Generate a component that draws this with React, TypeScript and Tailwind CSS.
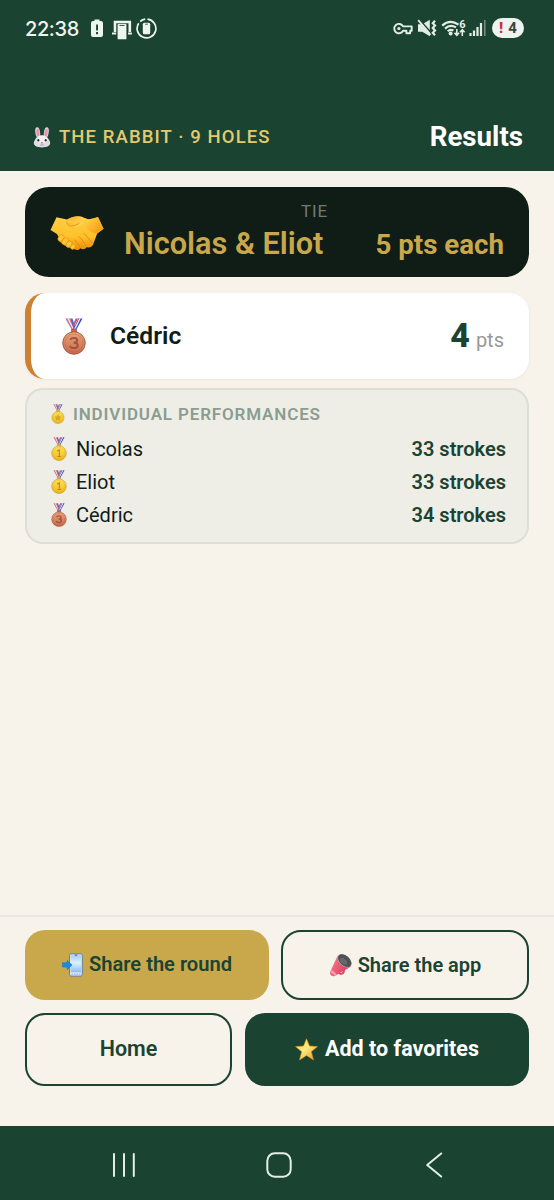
import React from "react";

function BatteryAlertIcon() {
  return (
    <svg className="h-[19px] w-[14px]" viewBox="0 0 14 19">
      <path fill="#edf5ee" fillRule="evenodd" d="M4.500 .5h5V2H11a2 2 0 0 1 2 2V16a2 2 0 0 1-2 2H3a2 2 0 0 1-2-2V4a2 2 0 0 1 2-2h1.500ZM6.100 5.500v6h1.900v-6ZM6.100 13v2.200h1.900V13Z" />
    </svg>
  );
}

function DevicesIcon() {
  return (
    <svg className="h-5 w-[22px]" viewBox="0 0 22 20">
      <path d="M4 12V2h14.800v10" fill="none" stroke="#edf5ee" strokeWidth="2.600" />
      <path d="M1 13.500h4.200M17 13.500h3.900" stroke="#edf5ee" strokeWidth="1.800" />
      <rect x="6.300" y="3.600" width="9.400" height="16" rx="1.300" fill="#edf5ee" stroke="#1b4332" strokeWidth=".5" />
      <path d="M9 5.500h4" stroke="#35604b" strokeWidth="1.200" strokeLinecap="round" />
    </svg>
  );
}

function PhoneRingIcon() {
  return (
    <svg className="h-[21px] w-[21px]" viewBox="0 0 21 21">
      <path d="M11.500 1.100a9.400 9.400 0 1 1-8.800 4.100M4.200 3.500a9.400 9.400 0 0 1 5-2.300" fill="none" stroke="#edf5ee" strokeWidth="1.700" />
      <rect x="6.800" y="4.800" width="7.400" height="11.400" rx="1.500" fill="#edf5ee" />
      <path d="M9.200 6.200h2.600" stroke="#35604b" strokeWidth="1" />
    </svg>
  );
}

function KeyIcon() {
  return (
    <svg className="h-[13px] w-5" viewBox="0 0 20 13">
      <path d="M10.100 4.400A4.700 4.700 0 1 0 10.100 8.700h3.300v2.600h3.800V8.700h1.500V4.400Z" fill="none" stroke="#e2eee5" strokeWidth="1.900" strokeLinejoin="round" />
      <circle cx="5.900" cy="6.500" r="1.600" fill="#e2eee5" />
    </svg>
  );
}

function MuteVibrateIcon() {
  return (
    <svg className="h-[18px] w-5" viewBox="0 0 20 18">
      <path d="M1 5.300h4.300L12.800 .8v16.400L5.300 12.700H1Z" fill="#e2eee5" />
      <path d="M2.200 .2 15.200 15" stroke="#1b4332" strokeWidth="1.500" />
      <path d="M1.200 1.200 13.500 15.800" stroke="#e2eee5" strokeWidth="1.800" />
      <path d="m18 1.800-2.200 2.400L18 6.600 15.800 9l2.200 2.400-2.200 2.400 2.200 2.400" fill="none" stroke="#e2eee5" strokeWidth="2.200" />
    </svg>
  );
}

function WifiIcon() {
  return (
    <svg className="h-[19px] w-[26px]" viewBox="0 0 26 19">
      <g fill="none" stroke="#e2eee5" strokeWidth="2.200">
        <path d="M1.200 6.600Q8.900-.5 17.500 5.600" />
        <path d="M4 9.600Q9 5 15 8.400" />
        <path d="M6.700 12.300Q9.200 10 12.400 11.500" />
      </g>
      <circle cx="9.600" cy="14.500" r="2" fill="#e2eee5" />
      <path d="M15.800 10v6.200m-2.300-2.400 2.300 2.500 2.300-2.500M21.300 17v-6.200M19 13.200l2.300-2.500 2.300 2.500" fill="none" stroke="#e2eee5" strokeWidth="1.600" />
      <text x="18.300" y="8.800" fill="#e2eee5" className="font-['Roboto',sans-serif] text-[11px] font-bold">6</text>
    </svg>
  );
}

function SignalIcon() {
  return (
    <svg className="h-[18px] w-[18px]" viewBox="0 0 18 18">
      <path d="M1.500 17v-3M5 17v-5.500M8.500 17V8M12 17V4" stroke="#e2eee5" strokeWidth="2.200" />
      <path d="M15.800 17V1" stroke="#799182" strokeWidth="1.500" />
    </svg>
  );
}

function Rabbit() {
  return (
    <svg className="h-[21px] w-[18px] shrink-0" viewBox="0 0 18 21">
      <g fill="#d8d7dc">
        <ellipse cx="4.700" cy="5.500" rx="2.400" ry="5.300" transform="rotate(-8 4.700 5.500)" />
        <ellipse cx="13.300" cy="5.500" rx="2.400" ry="5.300" transform="rotate(8 13.300 5.500)" />
      </g>
      <ellipse cx="4.900" cy="5.800" rx="1.500" ry="4.200" fill="#ec91ad" transform="rotate(-8 4.900 5.800)" />
      <ellipse cx="13.100" cy="5.800" rx="1.500" ry="4.200" fill="#ec91ad" transform="rotate(8 13.100 5.800)" />
      <path d="M9 8.300c4.500 0 5.600 2.500 7 4.400 3 4.500.2 7.700-7 7.700s-10-3.200-7-7.700c1.400-1.900 2.500-4.400 7-4.400Z" fill="#dedde1" />
      <ellipse cx="9" cy="12.500" rx="5.500" ry="3.800" fill="#f3f1f3" />
      <ellipse cx="5.300" cy="13.300" rx="1" ry="1.300" fill="#252327" />
      <ellipse cx="12.700" cy="13.300" rx="1" ry="1.300" fill="#252327" />
      <path d="M7.600 15h2.800L9 16.700Z" fill="#e66d91" />
      <path d="M9 16.500v1.200m-2 .3q1 .7 2-.3 1 1 2 .3" fill="none" stroke="#8e898f" strokeWidth=".6" />
    </svg>
  );
}

function Handshake() {
  return (
    <svg className="h-9 w-[54px] shrink-0" viewBox="0 0 54 36">
      <defs>
        <linearGradient id="hand-a" x1="0" y1="0" x2="0" y2="1">
          <stop stopColor="#ffcf43" />
          <stop offset=".6" stopColor="#ffc02b" />
          <stop offset="1" stopColor="#e98b08" />
        </linearGradient>
        <linearGradient id="hand-b" x1="0" y1="0" x2="1" y2=".5">
          <stop stopColor="#ffa829" />
          <stop offset=".45" stopColor="#ffd34b" />
          <stop offset="1" stopColor="#f8a31b" />
        </linearGradient>
      </defs>
      <path d="M6.500 2.300 17 4.500c3-2 7-3 12-3 4 0 6 2 9 3l10-2.200 5.500 11.400-6.300 4.700-4 10.800c-1.500 3-4.200 4-6.300 2.700-1.700 2.300-4.300 3-6.500 1.300-2 2.500-4.800 2.300-7 .4-2 .5-4-.3-5-2-3 .2-5-1.300-5.200-3.500-3-.2-5-2.500-4-5.200L7 19l-6.500-4Z" fill="url(#hand-a)" />
      <path d="M17 5C22 .8 30-.2 34.500 3.300L40 4.800l8-2.700 5.500 11.600-6.500 4.900c-4 0-8-2.600-12-6.600-2-1.400-5-1.200-7-.4-3 1.600-9.500 0-9.500-3.500 0-.7 3.500-.5 5-1.600Z" fill="url(#hand-b)" />
      <path d="M17 7c-.5 3 2 4.500 6.500 3.800 2-.3 3.500-1.800 5.500-2.300" fill="none" stroke="#e8920f" strokeWidth="1" strokeLinecap="round" />
      <path d="M34 18.500c3 2.500 5 6 8 9M29 21.500c3 2.500 4.500 6 7 9M25 25c2 2 3.500 4.500 5 6.500" fill="none" stroke="#df8608" strokeWidth=".9" strokeLinecap="round" />
      <g fill="#ffc638" stroke="#e0910f" strokeWidth=".6">
        <ellipse cx="11" cy="23" rx="2.600" ry="3.600" transform="rotate(38 11 23)" />
        <ellipse cx="15" cy="26.300" rx="2.700" ry="3.800" transform="rotate(38 15 26.300)" />
        <ellipse cx="19" cy="29.200" rx="2.500" ry="3.500" transform="rotate(38 19 29.200)" />
        <ellipse cx="23" cy="31.800" rx="2.100" ry="2.700" transform="rotate(38 23 31.800)" />
      </g>
    </svg>
  );
}

const medalColors = {
  gold: { light: "#ffe45c", base: "#efb71d", dark: "#c18a16" },
  bronze: { light: "#e9a47c", base: "#c9694a", dark: "#984b36" },
};

function Medal({ kind, mark, className }: { kind: "gold" | "bronze"; mark: string; className: string }) {
  const c = medalColors[kind];
  return (
    <svg className={`shrink-0 ${className}`} viewBox="0 0 24 37">
      <defs>
        <linearGradient id={`medal-${kind}`} x1="0" y1="0" x2="0" y2="1">
          <stop stopColor={c.light} />
          <stop offset="1" stopColor={c.base} />
        </linearGradient>
      </defs>
      <path d="M3.500.5h4.200L14 13h-3.500Z" fill="#dd6572" />
      <path d="M5.300.5h1.500l6 12h-1.400Z" fill="#f0f1ff" />
      <path d="M8 .5h2.500L13 8l-1 4Z" fill="#5366cf" />
      <path d="M16.200.5h4.300L13.500 13h-3Z" fill="#394cc4" />
      <path d="M17.200.5h1.500l-6 12h-1.400Z" fill="#f0f1ff" />
      <path d="M13.500.5H16l-4 8-.8-2Z" fill="#d75362" />
      <rect x="9.500" y="11" width="5" height="4" rx="1" fill={c.base} stroke={c.dark} strokeWidth=".7" />
      <circle cx="12" cy="25" r="11.300" fill={`url(#medal-${kind})`} stroke={c.dark} strokeWidth=".8" />
      <circle cx="12" cy="25" r="9" fill="none" stroke={c.dark} strokeOpacity=".35" strokeWidth=".8" />
      {mark === "star" ? (
        <path d="m12 18.500 2 4.200 4.500.6-3.300 3.200.8 4.500-4-2.200L8 31l.8-4.500-3.300-3.200 4.500-.6Z" fill={c.dark} fillOpacity=".6" />
      ) : mark === "1" ? (
        <path d="m9 22 3.500-2.200V30M9.500 30h6" fill="none" stroke={c.dark} strokeWidth="1.800" />
      ) : (
        <path d="M8.200 21.800c1.600-2.800 7-2.300 7 .5 0 1.800-1.700 2.400-3.500 2.400 2 0 4 .7 4 2.700 0 3.300-6.400 3.700-8 .6" fill="none" stroke={c.dark} strokeOpacity=".85" strokeWidth="2" />
      )}
    </svg>
  );
}

function PhoneArrow() {
  return (
    <svg className="h-6 w-[21px] shrink-0" viewBox="0 0 21 24">
      <defs>
        <linearGradient id="screen" x1="0" y1="0" x2="0" y2="1">
          <stop stopColor="#a5cdf8" />
          <stop offset=".45" stopColor="#dcf0ff" />
          <stop offset="1" stopColor="#8cbdf8" />
        </linearGradient>
      </defs>
      <rect x="7.500" y=".8" width="12.800" height="22.300" rx="1.500" fill="#d7e6f8" stroke="#6b7f98" />
      <rect x="8.500" y="2.200" width="10.800" height="17" fill="url(#screen)" />
      <path d="M12 1.500h4l-2 1.800Z" fill="#5b7088" />
      <path d="M9.500 21.200h9" stroke="#9cb8dc" strokeWidth="1.300" strokeDasharray="1.500 1" />
      <path d="M.5 9.700h4.800V7.500l4.800 4.400-4.800 4.800v-2.600H.5Z" fill="#168ce8" stroke="#0872c6" strokeWidth=".5" />
    </svg>
  );
}

function Megaphone() {
  return (
    <svg className="h-6 w-[23px] shrink-0" viewBox="0 0 23 24">
      <defs>
        <linearGradient id="horn" x1="0" y1="0" x2="1" y2=".6">
          <stop stopColor="#ff8594" />
          <stop offset="1" stopColor="#d9375b" />
        </linearGradient>
      </defs>
      <path d="M9.500 19.500c2 2.500 5.500 1.500 5.500-2.500" fill="none" stroke="#d8496b" strokeWidth="2" />
      <path d="M8.700 2.500 1 19.200c-.5 2.500 2.300 4.700 4.700 3.700L22 13.500Z" fill="url(#horn)" />
      <path d="M1 19.200c1.300.2 3.800 1.700 4.700 3.700l1.800-1C6.700 19.500 4 17.500 2 17Z" fill="#f5a0ad" />
      <ellipse cx="15.500" cy="7.800" rx="8.300" ry="5.400" fill="#a8a8ac" transform="rotate(42 15.500 7.800)" />
      <ellipse cx="15.700" cy="7.600" rx="7.700" ry="4.900" fill="#4e5054" transform="rotate(42 15.700 7.600)" />
      <ellipse cx="14.500" cy="8.400" rx="4.200" ry="2.600" fill="#66686c" transform="rotate(42 14.500 8.400)" />
    </svg>
  );
}

function Star() {
  return (
    <svg className="h-[23px] w-[23px] shrink-0" viewBox="0 0 23 23">
      <defs>
        <linearGradient id="star" x1="0" y1="0" x2="1" y2="1">
          <stop stopColor="#ffd52e" />
          <stop offset=".45" stopColor="#ffec80" />
          <stop offset="1" stopColor="#eb921b" />
        </linearGradient>
      </defs>
      <path d="m11.500.8 3 7.300 8 .5-6.200 5.100 2.200 8.300-7-4.500-7 4.500 2.200-8.300L.5 8.600l8-.5Z" fill="url(#star)" stroke="#d88c20" strokeWidth=".6" strokeLinejoin="round" />
    </svg>
  );
}

function StatusBar() {
  return (
    <div className="flex h-[57px] items-center pl-[25px] pr-[30px] text-[#edf5ee]">
      <span className="w-[65px] font-['Inter',sans-serif] text-[20px] font-medium leading-none tracking-[-0.400px]">22:38</span>
      <BatteryAlertIcon />
      <span className="ml-[7px] mt-0.5"><DevicesIcon /></span>
      <span className="ml-[3px]"><PhoneRingIcon /></span>
      <div className="-mt-px ml-auto flex items-center">
        <KeyIcon />
        <span className="ml-[4px]"><MuteVibrateIcon /></span>
        <span className="ml-[4px]"><WifiIcon /></span>
        <span className="ml-[2px]"><SignalIcon /></span>
        <span className="ml-[5px] flex h-5 w-8 items-center justify-center gap-[5px] rounded-full bg-[#edf3ef] font-['Roboto',sans-serif] text-[15px] font-bold leading-none text-[#39433e]">
          <span className="font-black text-[#d52c36]">!</span>
          <span>4</span>
        </span>
      </div>
    </div>
  );
}

const performances = [
  { name: "Nicolas", strokes: 33, kind: "gold" as const, mark: "1" },
  { name: "Eliot", strokes: 33, kind: "gold" as const, mark: "1" },
  { name: "Cédric", strokes: 34, kind: "bronze" as const, mark: "3" },
];

export default function App() {
  return (
    <div className="flex h-[1200px] w-[554px] flex-col bg-[#f7f3eb] font-['Roboto',sans-serif] text-[#101d17]">
      <header className="h-[171px] shrink-0 bg-[#1b4332]">
        <StatusBar />
        <div className="mt-[58px] flex h-11 items-center justify-between pl-[33px] pr-[31px]">
          <div className="flex items-center gap-2 text-[18.500px] font-medium leading-none tracking-[1.100px] text-[#e3ca70]">
            <Rabbit />
            <span>THE RABBIT · 9 HOLES</span>
          </div>
          <h1 className="text-[27.700px] font-bold leading-none text-white">Results</h1>
        </div>
      </header>

      <main className="flex-1 px-[25px] pt-4">
        <section className="flex h-[90px] rounded-[24px] bg-[#101d17] pl-[25px] pr-[25px]">
          <div className="pt-[28px]"><Handshake /></div>
          <div className="flex-1 pt-4 leading-none">
            <div className="pl-[197px] text-[17px] tracking-[0.900px] text-[#717975]">TIE</div>
            <div className="mt-[9px] flex items-center justify-between pl-5 text-[#c9a84c]">
              <span className="text-[30.700px] font-semibold">Nicolas &amp; Eliot</span>
              <span className="text-[27.700px] font-bold">5 pts each</span>
            </div>
          </div>
        </section>

        <section className="mt-4 flex h-[86px] items-center rounded-[20px] border-l-[6px] border-[#cd7f32] bg-white pl-[31px] pr-[25px] shadow-[0_1px_3px_rgba(27,67,50,0.06)]">
          <Medal kind="bronze" mark="3" className="h-[37px] w-6" />
          <span className="ml-6 text-[24.600px] font-semibold leading-none">Cédric</span>
          <div className="-mt-0.5 ml-auto flex items-baseline leading-none">
            <span className="text-[34px] font-extrabold text-[#1b4332]">4</span>
            <span className="ml-[6px] text-[20px] text-[#989898]">pts</span>
          </div>
        </section>

        <section className="mt-[9px] h-[156px] rounded-[18px] border-2 border-[#dcded8] bg-[#eeeee7] pl-6 pr-[21px] pt-[14px]">
          <div className="flex h-5 items-center gap-2 text-[17px] font-semibold leading-none tracking-[0.850px] text-[#8b9c91]">
            <Medal kind="gold" mark="star" className="h-5 w-[14px]" />
            <span>INDIVIDUAL PERFORMANCES</span>
          </div>
          <div className="mt-2">
            {performances.map((p) => (
              <div key={p.name} className="flex h-[33px] items-center text-[20px] leading-none">
                <Medal kind={p.kind} mark={p.mark} className="h-6 w-4" />
                <span className="ml-[9px]">{p.name}</span>
                <span className="ml-auto font-semibold text-[#1b4332]">{p.strokes} strokes</span>
              </div>
            ))}
          </div>
        </section>
      </main>

      <footer className="h-[211px] shrink-0 border-t-2 border-[#e9e7e0] px-[25px] pt-[13px] text-[20px] font-semibold leading-none text-[#1b4332]">
        <div className="flex gap-3">
          <button className="flex h-[70px] w-[244px] items-center justify-center gap-[6px] rounded-[20px] bg-[#c9a84c] pb-px text-[20.100px]">
            <PhoneArrow />
            <span>Share the round</span>
          </button>
          <button className="flex h-[70px] flex-1 items-center justify-center gap-[6px] rounded-[20px] border-2 border-[#1b4332] pb-px">
            <Megaphone />
            <span>Share the app</span>
          </button>
        </div>
        <div className="mt-[13px] flex gap-[13px] text-[21.500px]">
          <button className="h-[73px] w-[207px] rounded-[20px] border-2 border-[#1b4332] pb-px">Home</button>
          <button className="flex h-[73px] flex-1 items-center justify-center gap-[7px] rounded-[20px] bg-[#1b4332] pb-px font-bold text-white">
            <Star />
            <span>Add to favorites</span>
          </button>
        </div>
      </footer>

      <nav className="flex h-[74px] shrink-0 items-center justify-between bg-[#1b4332] pl-[112px] pr-[111px] pt-[3px]">
        <svg className="h-[26px] w-6" viewBox="0 0 24 26">
          <path d="M2 2v22M12 2v22M21.800 2v22" stroke="#e0f0e5" strokeWidth="2" strokeLinecap="round" />
        </svg>
        <svg className="mr-1 h-[26px] w-[26px]" viewBox="0 0 26 26">
          <rect x="1.300" y="1.300" width="23.400" height="23.400" rx="7.500" fill="none" stroke="#e0f0e5" strokeWidth="2" />
        </svg>
        <svg className="h-[26px] w-[18px]" viewBox="0 0 18 26">
          <path d="M16.200 1.500 2.200 13l14 11.500" fill="none" stroke="#e0f0e5" strokeWidth="2" strokeLinecap="round" strokeLinejoin="round" />
        </svg>
      </nav>
    </div>
  );
}
